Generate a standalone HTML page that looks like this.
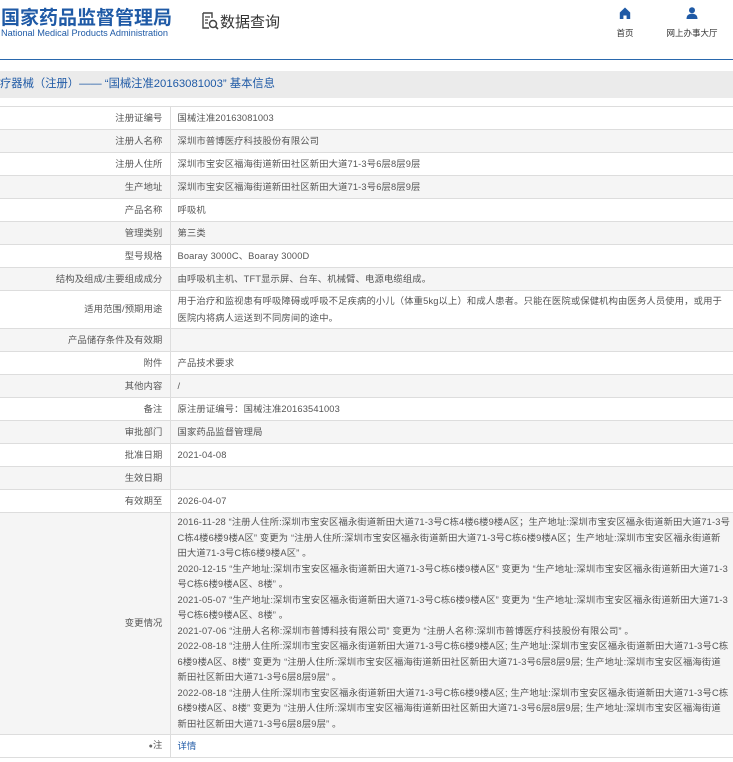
<!DOCTYPE html>
<html><head><meta charset="utf-8"><style>
*{margin:0;padding:0;box-sizing:border-box}
body{width:733px;height:762px;overflow:hidden;background:#fff;font-family:"Liberation Sans","Noto Sans CJK SC",sans-serif;color:#555;font-size:9.3px;letter-spacing:0.15px}
.hdr{position:relative;height:60px;border-bottom:1px solid #2a68ad;letter-spacing:0}
.logo1{position:absolute;left:1px;top:3px;font-size:19px;font-weight:bold;color:#1f5aa6}
.logo2{position:absolute;left:1px;top:28px;font-size:9.2px;color:#1f5aa6}
.sq{position:absolute;left:201px;top:11px;font-size:15px;color:#333}
.sq svg{vertical-align:-3px;margin-right:1px}
.nav{position:absolute;top:7px;font-size:8.5px;color:#333;text-align:center}
.bc{position:absolute;left:0;top:71px;width:733px;height:27px;background:#ebebeb;color:#1f5aa6;font-size:11.3px;line-height:27px;letter-spacing:0}
table{position:absolute;left:0;top:106px;width:733px;border-collapse:collapse}
td{border-top:1px solid #ddd;border-bottom:1px solid #ddd;height:23px;vertical-align:middle;line-height:16.4px}
td.l{width:170px;text-align:right;padding-right:7px;border-right:1px solid #ddd}
td.v{padding-left:7px;padding-right:3px}
tr:nth-child(even) td{background:#f5f5f5}
a{color:#1f5aa6;text-decoration:none}
</style></head><body>
<div class="hdr">
<div class="logo1">国家药品监督管理局</div>
<div class="logo2">National Medical Products Administration</div>
<div class="sq"><svg width="18" height="18" viewBox="0 0 18 18"><path d="M2 1h9v5M2 1v15h6" fill="none" stroke="#444" stroke-width="1.4"/><path d="M4 5h5M4 8h3M4 11h3" stroke="#444" stroke-width="1.2"/><circle cx="12" cy="12" r="3.5" fill="none" stroke="#444" stroke-width="1.5"/><path d="M14.5 14.5l2.5 2.5" stroke="#444" stroke-width="1.6"/></svg>数据查询</div>
<div class="nav" style="left:613px;width:24px"><svg width="12" height="12" viewBox="0 0 12 12"><path d="M6 0.5L0.8 5.5V12h3.6V8.5h3.2V12h3.6V5.5z" fill="#1f5aa6"/></svg><div style="margin-top:6px">首页</div></div>
<div class="nav" style="left:662px;width:60px"><svg width="12" height="12" viewBox="0 0 12 12"><circle cx="6" cy="3.2" r="3" fill="#1f5aa6"/><path d="M0.5 12C0.5 8 3 6.8 6 6.8S11.5 8 11.5 12z" fill="#1f5aa6"/></svg><div style="margin-top:6px">网上办事大厅</div></div>
</div>
<div class="bc">疗器械（注册）—— “国械注准20163081003” 基本信息</div>
<table>
<tr><td class="l">注册证编号</td><td class="v">国械注准20163081003</td></tr>
<tr><td class="l">注册人名称</td><td class="v">深圳市普博医疗科技股份有限公司</td></tr>
<tr><td class="l">注册人住所</td><td class="v">深圳市宝安区福海街道新田社区新田大道71-3号6层8层9层</td></tr>
<tr><td class="l">生产地址</td><td class="v">深圳市宝安区福海街道新田社区新田大道71-3号6层8层9层</td></tr>
<tr><td class="l">产品名称</td><td class="v">呼吸机</td></tr>
<tr><td class="l">管理类别</td><td class="v">第三类</td></tr>
<tr><td class="l">型号规格</td><td class="v">Boaray 3000C、Boaray 3000D</td></tr>
<tr><td class="l">结构及组成/主要组成成分</td><td class="v">由呼吸机主机、TFT显示屏、台车、机械臂、电源电缆组成。</td></tr>
<tr><td class="l" style="height:38px">适用范围/预期用途</td><td class="v">用于治疗和监视患有呼吸障碍或呼吸不足疾病的小儿（体重5kg以上）和成人患者。只能在医院或保健机构由医务人员使用，或用于医院内将病人运送到不同房间的途中。</td></tr>
<tr><td class="l">产品储存条件及有效期</td><td class="v"></td></tr>
<tr><td class="l">附件</td><td class="v">产品技术要求</td></tr>
<tr><td class="l">其他内容</td><td class="v">/</td></tr>
<tr><td class="l">备注</td><td class="v">原注册证编号：国械注准20163541003</td></tr>
<tr><td class="l">审批部门</td><td class="v">国家药品监督管理局</td></tr>
<tr><td class="l">批准日期</td><td class="v">2021-04-08</td></tr>
<tr><td class="l">生效日期</td><td class="v"></td></tr>
<tr><td class="l">有效期至</td><td class="v">2026-04-07</td></tr>
<tr><td class="l" style="height:222px">变更情况</td><td class="v" style="line-height:15.5px">2016-11-28 “注册人住所:深圳市宝安区福永街道新田大道71-3号C栋4楼6楼9楼A区；生产地址:深圳市宝安区福永街道新田大道71-3号C栋4楼6楼9楼A区” 变更为 “注册人住所:深圳市宝安区福永街道新田大道71-3号C栋6楼9楼A区；生产地址:深圳市宝安区福永街道新田大道71-3号C栋6楼9楼A区” 。<br>2020-12-15 “生产地址:深圳市宝安区福永街道新田大道71-3号C栋6楼9楼A区” 变更为 “生产地址:深圳市宝安区福永街道新田大道71-3号C栋6楼9楼A区、8楼” 。<br>2021-05-07 “生产地址:深圳市宝安区福永街道新田大道71-3号C栋6楼9楼A区” 变更为 “生产地址:深圳市宝安区福永街道新田大道71-3号C栋6楼9楼A区、8楼” 。<br>2021-07-06 “注册人名称:深圳市普博科技有限公司” 变更为 “注册人名称:深圳市普博医疗科技股份有限公司” 。<br>2022-08-18 “注册人住所:深圳市宝安区福永街道新田大道71-3号C栋6楼9楼A区; 生产地址:深圳市宝安区福永街道新田大道71-3号C栋6楼9楼A区、8楼” 变更为 “注册人住所:深圳市宝安区福海街道新田社区新田大道71-3号6层8层9层; 生产地址:深圳市宝安区福海街道新田社区新田大道71-3号6层8层9层” 。<br>2022-08-18 “注册人住所:深圳市宝安区福永街道新田大道71-3号C栋6楼9楼A区; 生产地址:深圳市宝安区福永街道新田大道71-3号C栋6楼9楼A区、8楼” 变更为 “注册人住所:深圳市宝安区福海街道新田社区新田大道71-3号6层8层9层; 生产地址:深圳市宝安区福海街道新田社区新田大道71-3号6层8层9层” 。</td></tr>
<tr><td class="l"><span style="font-size:7px;color:#666">●</span>注</td><td class="v"><a>详情</a></td></tr>
</table>
</body></html>
